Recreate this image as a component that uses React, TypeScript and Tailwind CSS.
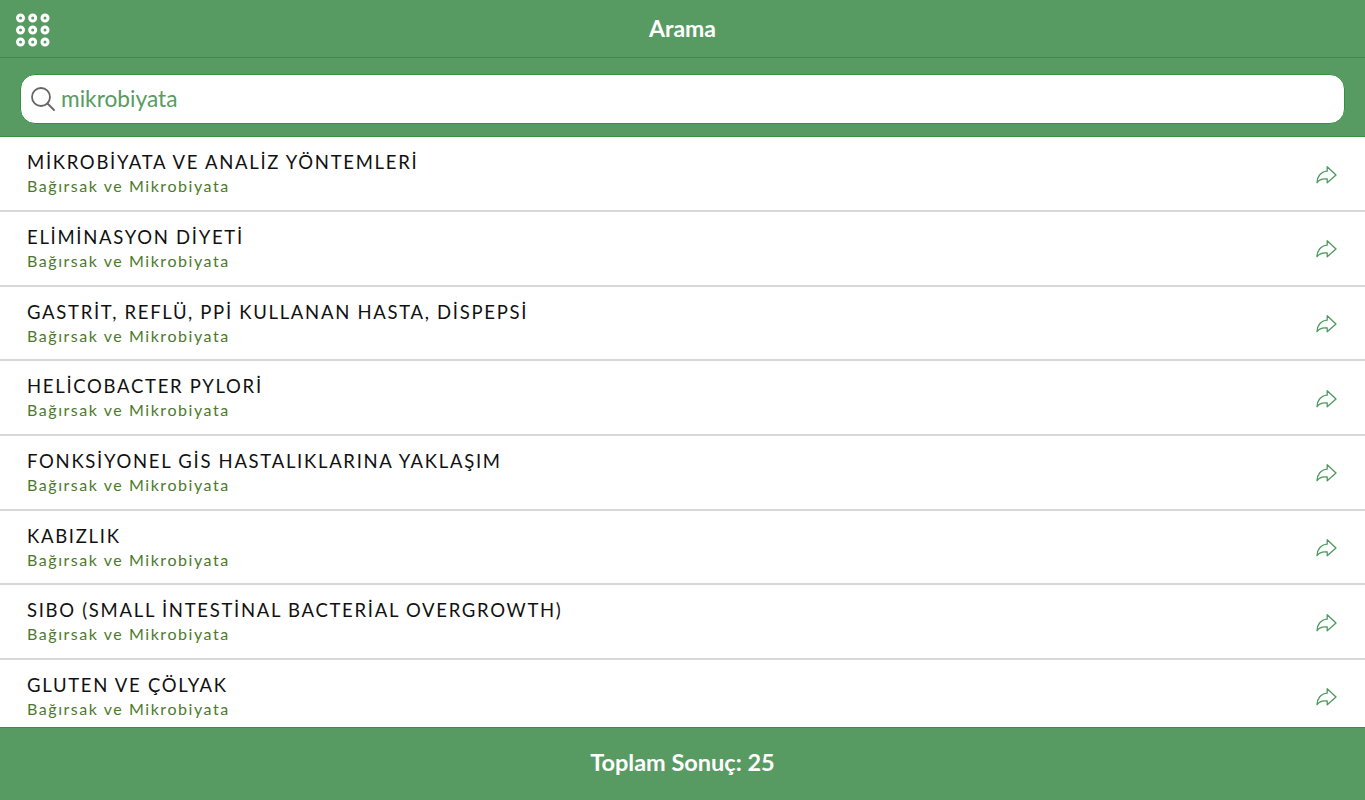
const results = [
  'MİKROBİYATA VE ANALİZ YÖNTEMLERİ',
  'ELİMİNASYON DİYETİ',
  'GASTRİT, REFLÜ, PPİ KULLANAN HASTA, DİSPEPSİ',
  'HELİCOBACTER PYLORİ',
  'FONKSİYONEL GİS HASTALIKLARINA YAKLAŞIM',
  'KABIZLIK',
  'SIBO (SMALL İNTESTİNAL BACTERİAL OVERGROWTH)',
  'GLUTEN VE ÇÖLYAK',
];

function AppsIcon() {
  return (
    <svg width="36" height="36" viewBox="0 0 36 36" fill="none" stroke="#fff" strokeWidth="3">
      {[6, 18, 30].map((cy) =>
        [5.5, 17.7, 30].map((cx) => <circle key={`${cx}-${cy}`} cx={cx} cy={cy} r="3" />)
      )}
    </svg>
  );
}

function SearchIcon() {
  return (
    <svg width="26" height="26" viewBox="0 0 26 26" fill="none" stroke="#666" strokeWidth="1.8" strokeLinecap="round">
      <circle cx="11" cy="11" r="9" />
      <path d="M17.5 17.5 L24 24" />
    </svg>
  );
}

function ShareIcon() {
  return (
    <svg width="22" height="20" viewBox="0 0 22 20" fill="none" stroke="#4f9a5e" strokeWidth="1.3" strokeLinejoin="round" strokeLinecap="round">
      <path d="M2 18.7 C2 13 5.5 7.7 12.2 7.2 L12.2 2.7 L21 11 L12.2 18.7 L12.2 15 C7.5 14.2 4.5 15.2 2 18.7 Z" />
    </svg>
  );
}

function ResultRow({ title }: { title: string }) {
  return (
    <div className="flex h-[74.67px] shrink-0 items-center justify-between border-b-2 border-[#d8d8d8] pl-[27px] pr-[28px]">
      <div className="flex flex-col gap-[2px] pb-[1px]">
        <span className="text-[18.5px] leading-[24px] tracking-[1.7px] text-[#111]">{title}</span>
        <span className="text-[16px] leading-[20px] tracking-[1.55px] text-[#4c7a2c]">Bağırsak ve Mikrobiyata</span>
      </div>
      <ShareIcon />
    </div>
  );
}

export default function App() {
  return (
    <div className="flex h-screen flex-col overflow-hidden bg-white font-['Lato','Noto_Sans',sans-serif]">
      <header className="relative flex h-[58px] shrink-0 items-center justify-center border-b border-[#47824f] bg-[#579b62]">
        <button className="absolute left-[15px] top-[12px]">
          <AppsIcon />
        </button>
        <h1 className="text-[23px] font-bold text-white">Arama</h1>
      </header>
      <div className="shrink-0 border-b border-[#2e9440] bg-[#579b62] px-[20px] pb-[12.4px] pt-[16px]">
        <div className="flex h-[50px] items-center gap-[5px] rounded-[15px] border border-[#2e9440] bg-white pl-[9px]">
          <SearchIcon />
          <span className="text-[22.7px] text-[#579b62]">mikrobiyata</span>
        </div>
      </div>
      <main className="min-h-0 flex-1 overflow-hidden">
        {results.map((title) => (
          <ResultRow key={title} title={title} />
        ))}
      </main>
      <footer className="flex h-[73px] shrink-0 items-center justify-center border-t border-[#47824f] bg-[#579b62] pb-[3px]">
        <span className="text-[23.5px] font-bold text-white">Toplam Sonuç: 25</span>
      </footer>
    </div>
  );
}
